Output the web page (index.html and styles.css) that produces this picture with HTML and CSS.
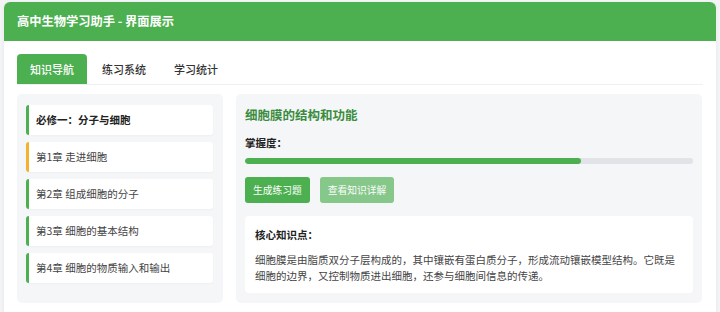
FILE: index.html
```html
<!DOCTYPE html>
<html lang="zh-CN">
<head>
<meta charset="utf-8">
<title>高中生物学习助手 - 界面展示</title>
<link rel="stylesheet" href="styles.css">
</head>
<body>
<div class="app">
  <header class="app-header">高中生物学习助手 - 界面展示</header>
  <div class="app-body">
    <nav class="tabs">
      <div class="tab active">知识导航</div>
      <div class="tab">练习系统</div>
      <div class="tab">学习统计</div>
    </nav>
    <div class="content">
      <aside class="side">
        <div class="chapter module">必修一：分子与细胞</div>
        <div class="chapter current">第1章 走进细胞</div>
        <div class="chapter">第2章 组成细胞的分子</div>
        <div class="chapter">第3章 细胞的基本结构</div>
        <div class="chapter">第4章 细胞的物质输入和输出</div>
      </aside>
      <main class="detail">
        <h2 class="topic">细胞膜的结构和功能</h2>
        <div class="label">掌握度：</div>
        <div class="progress"><div class="progress-fill" style="width:75%"></div></div>
        <div class="actions">
          <button class="btn">生成练习题</button>
          <button class="btn btn-light">查看知识详解</button>
        </div>
        <section class="knowledge">
          <div class="knowledge-title">核心知识点：</div>
          <p class="knowledge-text">细胞膜是由脂质双分子层构成的，其中镶嵌有蛋白质分子，形成流动镶嵌模型结构。它既是细胞的边界，又控制物质进出细胞，还参与细胞间信息的传递。</p>
        </section>
      </main>
    </div>
  </div>
</div>
</body>
</html>
```
FILE: styles.css
```css
* { box-sizing: border-box; }
html, body { margin: 0; }
html, body { height: 312px; overflow: hidden; }
body {
  background: #f3f4f6;
  padding: 2px 4px 0;
  font-family: "Noto Sans CJK SC", "Noto Sans", sans-serif;
  color: #333;
}
.app {
  background: #fff;
  border-radius: 6px;
  box-shadow: 0 1px 4px rgba(0,0,0,0.06);
  overflow: hidden;
  height: 330px;
}
.app-header {
  background: #4caf50;
  color: #fff;
  font-size: 12.25px;
  font-weight: 700;
  height: 39px;
  line-height: 39px;
  padding-left: 13px;
}
.app-body {
  padding: 13px 13px 0;
}
.tabs {
  display: flex;
  gap: 2px;
  border-bottom: 1px solid #eef0f2;
}
.tab {
  height: 30px;
  line-height: 30px;
  padding: 0 13px;
  font-size: 11px;
  font-weight: 500;
  color: #333;
  border-radius: 4px 4px 0 0;
}
.tab.active {
  background: #4caf50;
  color: #fff;
}
.content {
  display: grid;
  grid-template-columns: 206px 1fr;
  gap: 13px;
  margin-top: 9px;
  padding-right: 1px;
}
.side {
  background: #f5f6f8;
  border-radius: 5px;
  padding: 11px 10px 12px 9px;
  display: flex;
  flex-direction: column;
  gap: 7px;
}
.chapter {
  background: #fff;
  border-left: 3px solid #4caf50;
  border-radius: 3px;
  height: 30px;
  line-height: 30px;
  padding-left: 7px;
  font-size: 10.5px;
  color: #444;
  box-shadow: 0 1px 2px rgba(0,0,0,0.03);
}
.chapter.module {
  font-weight: 700;
  color: #222;
}
.chapter.current {
  border-left-color: #f2b230;
}
.detail {
  background: #f5f6f8;
  border-radius: 5px;
  padding: 10px 9px 10px 9px;
}
.topic {
  margin: 0;
  font-size: 12.5px;
  line-height: 22px;
  font-weight: 700;
  color: #3a8c3e;
}
.label {
  margin-top: 9px;
  font-size: 10.5px;
  line-height: 16px;
  font-weight: 700;
  color: #222;
}
.progress {
  margin-top: 7px;
  height: 6px;
  background: #e2e3e6;
  border-radius: 3px;
  overflow: hidden;
}
.progress-fill {
  height: 100%;
  background: #4caf50;
  border-radius: 3px;
}
.actions {
  display: flex;
  gap: 10px;
  margin-top: 13px;
}
.btn {
  font-family: inherit;
  border: 0;
  background: #4caf50;
  color: #fff;
  font-size: 9.75px;
  height: 26px;
  padding: 0 8px;
  border-radius: 3px;
}
.btn-light {
  opacity: 0.65;
}
.knowledge {
  margin-top: 13px;
  background: #fff;
  border-radius: 4px;
  padding: 11px 10px 9px 10px;
}
.knowledge-title {
  font-size: 10.5px;
  line-height: 16px;
  font-weight: 700;
  color: #222;
}
.knowledge-text {
  margin: 9px 0 0;
  font-size: 10.5px;
  line-height: 16px;
  color: #444;
}
```
